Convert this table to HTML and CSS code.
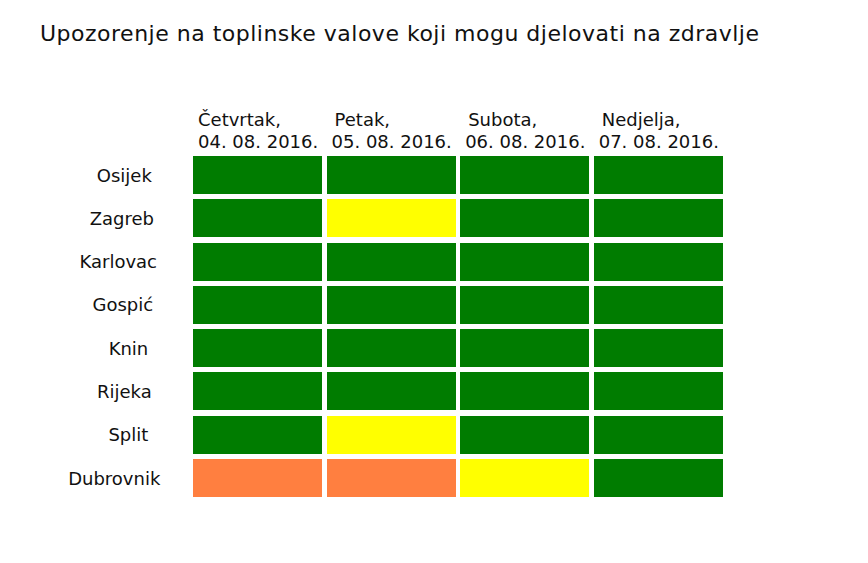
FILE: index.html
```html
<!DOCTYPE html>
<html lang="hr">
<head>
<meta charset="utf-8">
<title>Upozorenje na toplinske valove</title>
<link rel="stylesheet" href="styles.css">
</head>
<body>
<div class="page">
  <h1 class="title">Upozorenje na toplinske valove koji mogu djelovati na zdravlje</h1>
  <div class="chart">
    <div class="head">
      <div class="corner"></div>
      <div class="day">Četvrtak,<br>04. 08. 2016.</div>
      <div class="day shift">Petak,<br>05. 08. 2016.</div>
      <div class="day shift">Subota,<br>06. 08. 2016.</div>
      <div class="day shift">Nedjelja,<br>07. 08. 2016.</div>
    </div>
    <div class="grid">
      <div class="city"><span>Osijek</span></div>
      <div class="cell g"></div><div class="cell g"></div><div class="cell g"></div><div class="cell g"></div>
      <div class="city"><span>Zagreb</span></div>
      <div class="cell g"></div><div class="cell y"></div><div class="cell g"></div><div class="cell g"></div>
      <div class="city"><span>Karlovac</span></div>
      <div class="cell g"></div><div class="cell g"></div><div class="cell g"></div><div class="cell g"></div>
      <div class="city"><span>Gospić</span></div>
      <div class="cell g"></div><div class="cell g"></div><div class="cell g"></div><div class="cell g"></div>
      <div class="city"><span>Knin</span></div>
      <div class="cell g"></div><div class="cell g"></div><div class="cell g"></div><div class="cell g"></div>
      <div class="city"><span>Rijeka</span></div>
      <div class="cell g"></div><div class="cell g"></div><div class="cell g"></div><div class="cell g"></div>
      <div class="city"><span>Split</span></div>
      <div class="cell g"></div><div class="cell y"></div><div class="cell g"></div><div class="cell g"></div>
      <div class="city"><span>Dubrovnik</span></div>
      <div class="cell o"></div><div class="cell o"></div><div class="cell y"></div><div class="cell g"></div>
    </div>
  </div>
</div>
</body>
</html>
```

FILE: styles.css
```css
html, body {
  margin: 0;
  padding: 0;
  background: #ffffff;
}

body {
  font-family: "DejaVu Sans", "Liberation Sans", sans-serif;
  color: #111111;
}

.page {
  width: 868px;
  height: 563px;
  overflow: hidden;
}

.title {
  margin: 0;
  padding: 22px 0 0 40px;
  font-size: 22px;
  font-weight: normal;
  letter-spacing: 0.5px;
  line-height: 24px;
  height: 24px;
  white-space: nowrap;
}

.chart {
  margin-top: 63px;
  margin-left: 58.67px;
}

.head,
.grid {
  display: grid;
  grid-template-columns: 130px repeat(4, 129.25px);
  column-gap: 4.33px;
}

.head {
  margin-bottom: 3px;
}

.day {
  font-size: 18px;
  line-height: 22px;
  padding-left: 5px;
  white-space: nowrap;
}

.day.shift {
  text-indent: 3px;
}

.grid {
  grid-template-rows: repeat(8, 38px);
  row-gap: 5.3px;
}

.city {
  font-size: 18px;
  display: flex;
  align-items: center;
  padding-left: 80.5px;
}

.city span {
  white-space: nowrap;
  transform: translateX(-77%);
}

.cell {
  box-sizing: border-box;
}

.g { background: #007c00; }
.y { background: #ffff00; }
.o { background: #ff7f40; }
```
